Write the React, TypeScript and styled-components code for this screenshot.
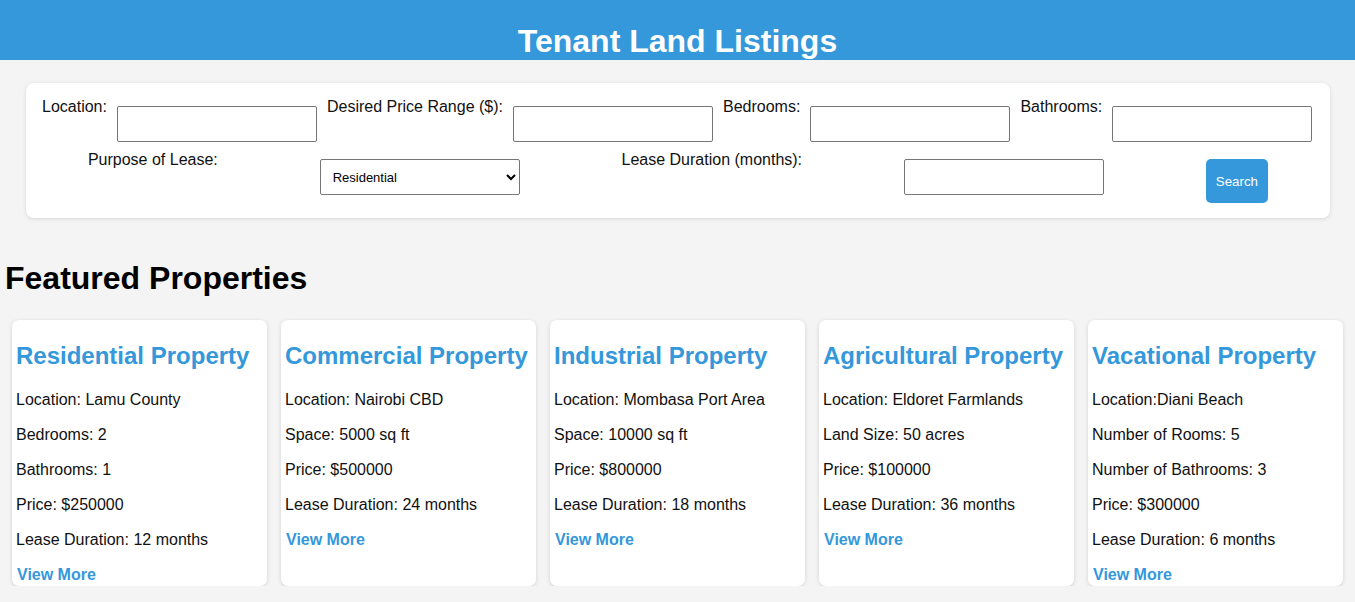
import React from 'react'
import styled, { createGlobalStyle } from 'styled-components'

const GlobalStyle = createGlobalStyle`
  body {
    margin: 0;
    background: #f4f4f4;
    font-family: "Liberation Sans", Arial, sans-serif;
    color: #111;
  }
`

const Header = styled.header`
  height: 60px;
  box-sizing: border-box;
  padding-top: 23px;
  background: #3498db;
  text-align: center;
  overflow: hidden;
`

const Title = styled.h1`
  margin: 0;
  font-size: 32px;
  color: #fff;
`

const SearchCard = styled.form`
  margin: 23px 25px 21px 26px;
  padding: 15px 16px;
  background: #fff;
  border-radius: 8px;
  box-shadow: 0 1px 4px rgba(0, 0, 0, 0.12);
  display: flex;
  flex-direction: column;
  gap: 9px;
`

const FieldRow = styled.div<{ $spread?: boolean }>`
  display: flex;
  justify-content: ${(p) => (p.$spread ? 'space-around' : 'flex-start')};
  align-items: flex-start;
  gap: 10px;
`

const Label = styled.label`
  font-size: 16px;
`

const TextInput = styled.input`
  margin-top: 8px;
  width: 200px;
  height: 36px;
  box-sizing: border-box;
  border: 1px solid #767676;
  border-radius: 2px;
  background: #fff;
`

const Select = styled.select`
  margin-top: 8px;
  width: 200px;
  height: 36px;
  box-sizing: border-box;
  padding: 0 8px;
  border: 1px solid #767676;
  border-radius: 2px;
  background: #fff;
  font-family: "Liberation Sans", Arial, sans-serif;
  font-size: 13px;
  color: #000;
`

const SearchButton = styled.button`
  margin-top: 8px;
  height: 44px;
  padding: 0 10px;
  border: none;
  border-radius: 5px;
  background: #3498db;
  color: #fff;
  font-family: "Liberation Sans", Arial, sans-serif;
  font-size: 13.33px;
`

const SectionTitle = styled.h1`
  margin: 42px 5px 21px;
  font-size: 32px;
  color: #000;
`

const CardGrid = styled.div`
  display: grid;
  grid-template-columns: repeat(5, 1fr);
  gap: 14px;
  padding: 2px 12px 0;
`

const PropertyCard = styled.div`
  background: #fff;
  border-radius: 7px;
  box-shadow: 0 1px 4px rgba(0, 0, 0, 0.14);
  padding: 1px 4px 2px;
  line-height: 19px;
  font-size: 16px;
`

const CardTitle = styled.h2`
  margin: 20px 0;
  font-size: 24px;
  line-height: 29px;
  color: #3498db;
  white-space: nowrap;
`

const Detail = styled.p`
  margin: 16px 0;
`

const ViewMore = styled.a`
  margin-left: 1px;
  font-weight: bold;
  color: #3498db;
  text-decoration: none;
`

const properties = [
  {
    title: 'Residential Property',
    details: ['Location: Lamu County', 'Bedrooms: 2', 'Bathrooms: 1', 'Price: $250000', 'Lease Duration: 12 months'],
  },
  {
    title: 'Commercial Property',
    details: ['Location: Nairobi CBD', 'Space: 5000 sq ft', 'Price: $500000', 'Lease Duration: 24 months'],
  },
  {
    title: 'Industrial Property',
    details: ['Location: Mombasa Port Area', 'Space: 10000 sq ft', 'Price: $800000', 'Lease Duration: 18 months'],
  },
  {
    title: 'Agricultural Property',
    details: ['Location: Eldoret Farmlands', 'Land Size: 50 acres', 'Price: $100000', 'Lease Duration: 36 months'],
  },
  {
    title: 'Vacational Property',
    details: ['Location:Diani Beach', 'Number of Rooms: 5', 'Number of Bathrooms: 3', 'Price: $300000', 'Lease Duration: 6 months'],
  },
]

const App = () => {
  return (
    <>
      <GlobalStyle />
      <Header>
        <Title>Tenant Land Listings</Title>
      </Header>
      <SearchCard onSubmit={(e) => e.preventDefault()}>
        <FieldRow>
          <Label htmlFor="location">Location:</Label>
          <TextInput id="location" type="text" />
          <Label htmlFor="price">Desired Price Range ($):</Label>
          <TextInput id="price" type="text" />
          <Label htmlFor="bedrooms">Bedrooms:</Label>
          <TextInput id="bedrooms" type="number" />
          <Label htmlFor="bathrooms">Bathrooms:</Label>
          <TextInput id="bathrooms" type="number" />
        </FieldRow>
        <FieldRow $spread>
          <Label htmlFor="purpose">Purpose of Lease:</Label>
          <Select id="purpose" defaultValue="residential">
            <option value="residential">Residential</option>
            <option value="commercial">Commercial</option>
            <option value="industrial">Industrial</option>
            <option value="agricultural">Agricultural</option>
            <option value="vacational">Vacational</option>
          </Select>
          <Label htmlFor="duration">Lease Duration (months):</Label>
          <TextInput id="duration" type="number" />
          <SearchButton type="submit">Search</SearchButton>
        </FieldRow>
      </SearchCard>
      <SectionTitle>Featured Properties</SectionTitle>
      <CardGrid>
        {properties.map((p) => (
          <PropertyCard key={p.title}>
            <CardTitle>{p.title}</CardTitle>
            {p.details.map((d) => (
              <Detail key={d}>{d}</Detail>
            ))}
            <ViewMore href="#">View More</ViewMore>
          </PropertyCard>
        ))}
      </CardGrid>
    </>
  )
}

export default App
